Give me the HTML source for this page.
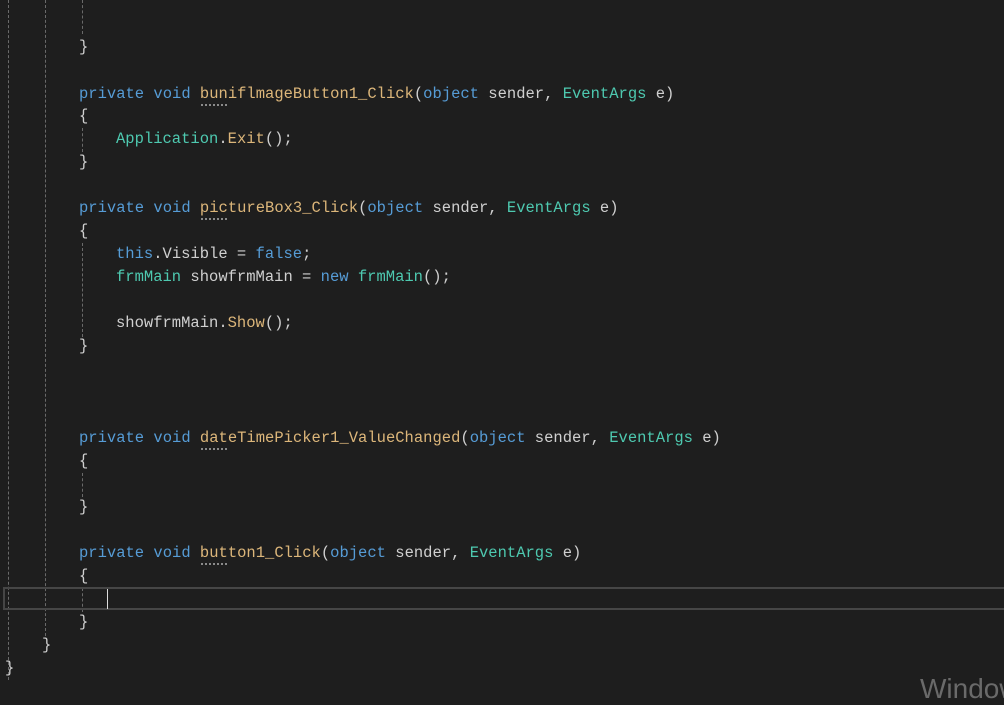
<!DOCTYPE html>
<html><head><meta charset="utf-8"><style>
html,body{margin:0;padding:0;width:1004px;height:693px;overflow:hidden;background:#1e1e1e;}
.l{position:absolute;height:23px;line-height:23px;font-family:"Liberation Mono",monospace;font-size:15.5px;color:#d0d0d0;white-space:pre;}
.k{color:#569cd6}.t{color:#4ec9b0}.m{color:#dcb67a}
.g{position:absolute;width:0;border-left:1px dashed #6a6a6a;}
.d{position:relative}
.d::after{content:"";position:absolute;left:1px;top:19px;width:26px;border-top:2px dotted #8a8a8a;}
</style></head><body>
<div class="g" style="left:8px;top:0;height:680px"></div>
<div class="g" style="left:45px;top:0;height:636px"></div>
<div class="g" style="left:82px;top:0;height:34px"></div>
<div class="g" style="left:82px;top:128px;height:24px"></div>
<div class="g" style="left:82px;top:243px;height:94px"></div>
<div class="g" style="left:82px;top:473px;height:24px"></div>
<div class="g" style="left:82px;top:588px;height:24px"></div>
<div style="position:absolute;left:3px;top:587px;width:1010px;height:19px;border:2px solid #464646;"></div>
<div style="position:absolute;left:107px;top:589px;width:1px;height:20px;background:#dcdcdc;"></div>

<div class="l" style="left:79px;top:36px">}</div>
<div class="l" style="left:79px;top:83px"><span class="k">private void </span><span class="m d">buniflmageButton1_Click</span>(<span class="k">object</span> sender, <span class="t">EventArgs</span> e)</div>
<div class="l" style="left:79px;top:105px">{</div>
<div class="l" style="left:116px;top:128px"><span class="t">Application</span>.<span class="m">Exit</span>();</div>
<div class="l" style="left:79px;top:151px">}</div>
<div class="l" style="left:79px;top:197px"><span class="k">private void </span><span class="m d">pictureBox3_Click</span>(<span class="k">object</span> sender, <span class="t">EventArgs</span> e)</div>
<div class="l" style="left:79px;top:220px">{</div>
<div class="l" style="left:116px;top:243px"><span class="k">this</span>.Visible = <span class="k">false</span>;</div>
<div class="l" style="left:116px;top:266px"><span class="t">frmMain</span> showfrmMain = <span class="k">new</span> <span class="t">frmMain</span>();</div>
<div class="l" style="left:116px;top:312px">showfrmMain.<span class="m">Show</span>();</div>
<div class="l" style="left:79px;top:335px">}</div>
<div class="l" style="left:79px;top:427px"><span class="k">private void </span><span class="m d">dateTimePicker1_ValueChanged</span>(<span class="k">object</span> sender, <span class="t">EventArgs</span> e)</div>
<div class="l" style="left:79px;top:450px">{</div>
<div class="l" style="left:79px;top:496px">}</div>
<div class="l" style="left:79px;top:542px"><span class="k">private void </span><span class="m d">button1_Click</span>(<span class="k">object</span> sender, <span class="t">EventArgs</span> e)</div>
<div class="l" style="left:79px;top:565px">{</div>
<div class="l" style="left:79px;top:611px">}</div>
<div class="l" style="left:42px;top:634px">}</div>
<div class="l" style="left:5px;top:657px">}</div>
<div style="position:absolute;left:920px;top:673px;font-family:'Liberation Sans',sans-serif;font-size:28px;color:#6a6a6a;white-space:nowrap;">Windows</div>
</body></html>
